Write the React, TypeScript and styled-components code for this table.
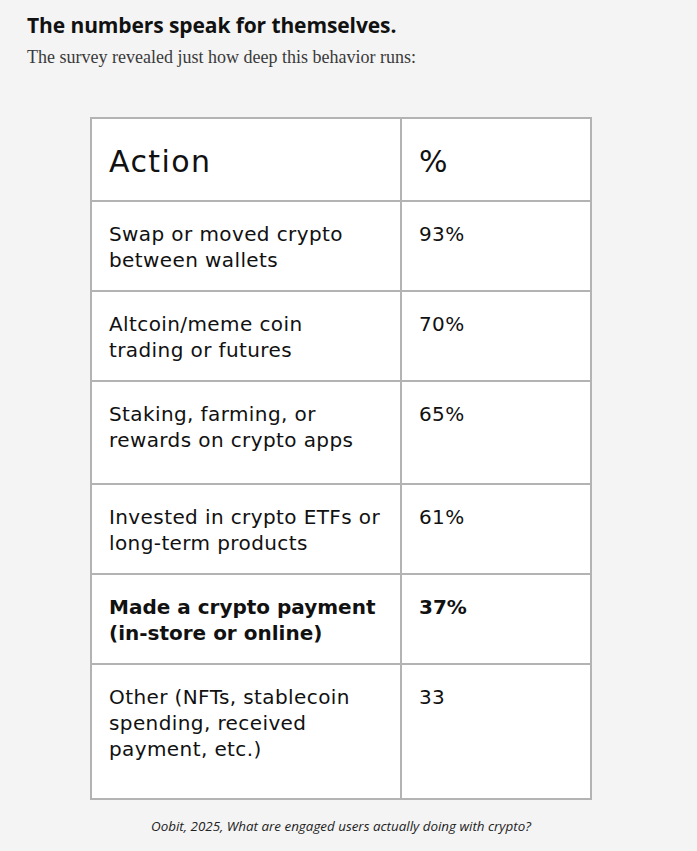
import React from "react";
import styled, { createGlobalStyle } from "styled-components";

const Global = createGlobalStyle`
  html, body { margin: 0; padding: 0; background: #f4f4f4; }
  body { width: 697px; height: 851px; overflow: hidden; }
`;

const Page = styled.main`
  padding: 11px 0 0 27px;
  box-sizing: border-box;
  width: 697px;
`;

const Heading = styled.h2`
  margin: 0;
  font-family: "Open Sans", "Noto Sans", sans-serif;
  font-weight: 700;
  font-size: 21px;
  line-height: 28px;
  color: #111;
  letter-spacing: -0.1px;
`;

const Lead = styled.p`
  margin: 6px 0 0;
  font-family: "Liberation Serif", "Times New Roman", serif;
  font-size: 18px;
  line-height: 24px;
  color: #3a3a3a;
`;

const Figure = styled.figure`
  margin: 48px 0 0 63px;
  width: 502px;
`;

const Table = styled.table`
  border-collapse: collapse;
  table-layout: fixed;
  width: 502px;
  background: #fff;
  border: 2px solid #b3b3b3;
  font-family: "DejaVu Sans", Lato, sans-serif;
  color: #111;
`;

const Row = styled.tr<{ $h: number }>`
  height: ${(p) => p.$h}px;
`;

const HeadCell = styled.th`
  border: 2px solid #b3b3b3;
  text-align: left;
  font-weight: 400;
  font-size: 30px;
  letter-spacing: 1.4px;
  padding: 4px 0 0 17px;
  vertical-align: middle;
`;

const Cell = styled.td<{ $bold?: boolean }>`
  border: 2px solid #b3b3b3;
  vertical-align: top;
  padding: 19px 4px 0 17px;
  font-size: 20px;
  line-height: 26px;
  letter-spacing: ${(p) => (p.$bold ? "0px" : "0.4px")};
  font-weight: ${(p) => (p.$bold ? 700 : 400)};
  white-space: nowrap;
`;

const Caption = styled.figcaption`
  margin-top: 17px;
  text-align: center;
  font-family: "Open Sans", "Noto Sans", sans-serif;
  font-style: italic;
  font-size: 13.4px;
  color: #222;
`;

const rows: { action: React.ReactNode; pct: string; h: number; bold?: boolean }[] = [
  { action: <>Swap or moved crypto<br />between wallets</>, pct: "93%", h: 90 },
  { action: <>Altcoin/meme coin<br />trading or futures</>, pct: "70%", h: 90 },
  { action: <>Staking, farming, or<br />rewards on crypto apps</>, pct: "65%", h: 103 },
  { action: <>Invested in crypto ETFs or<br />long-term products</>, pct: "61%", h: 90 },
  { action: <>Made a crypto payment<br />(in-store or online)</>, pct: "37%", h: 90, bold: true },
  { action: <>Other (NFTs, stablecoin<br />spending, received<br />payment, etc.)</>, pct: "33", h: 135 },
];

export default function App() {
  return (
    <>
      <Global />
      <Page>
        <Heading>The numbers speak for themselves.</Heading>
        <Lead>The survey revealed just how deep this behavior runs:</Lead>
        <Figure>
          <Table>
            <colgroup>
              <col style={{ width: 310 }} />
              <col />
            </colgroup>
            <thead>
              <Row $h={83}>
                <HeadCell>Action</HeadCell>
                <HeadCell>%</HeadCell>
              </Row>
            </thead>
            <tbody>
              {rows.map((r, i) => (
                <Row key={i} $h={r.h}>
                  <Cell $bold={r.bold}>{r.action}</Cell>
                  <Cell $bold={r.bold}>{r.pct}</Cell>
                </Row>
              ))}
            </tbody>
          </Table>
          <Caption>Oobit, 2025, What are engaged users actually doing with crypto?</Caption>
        </Figure>
      </Page>
    </>
  );
}
